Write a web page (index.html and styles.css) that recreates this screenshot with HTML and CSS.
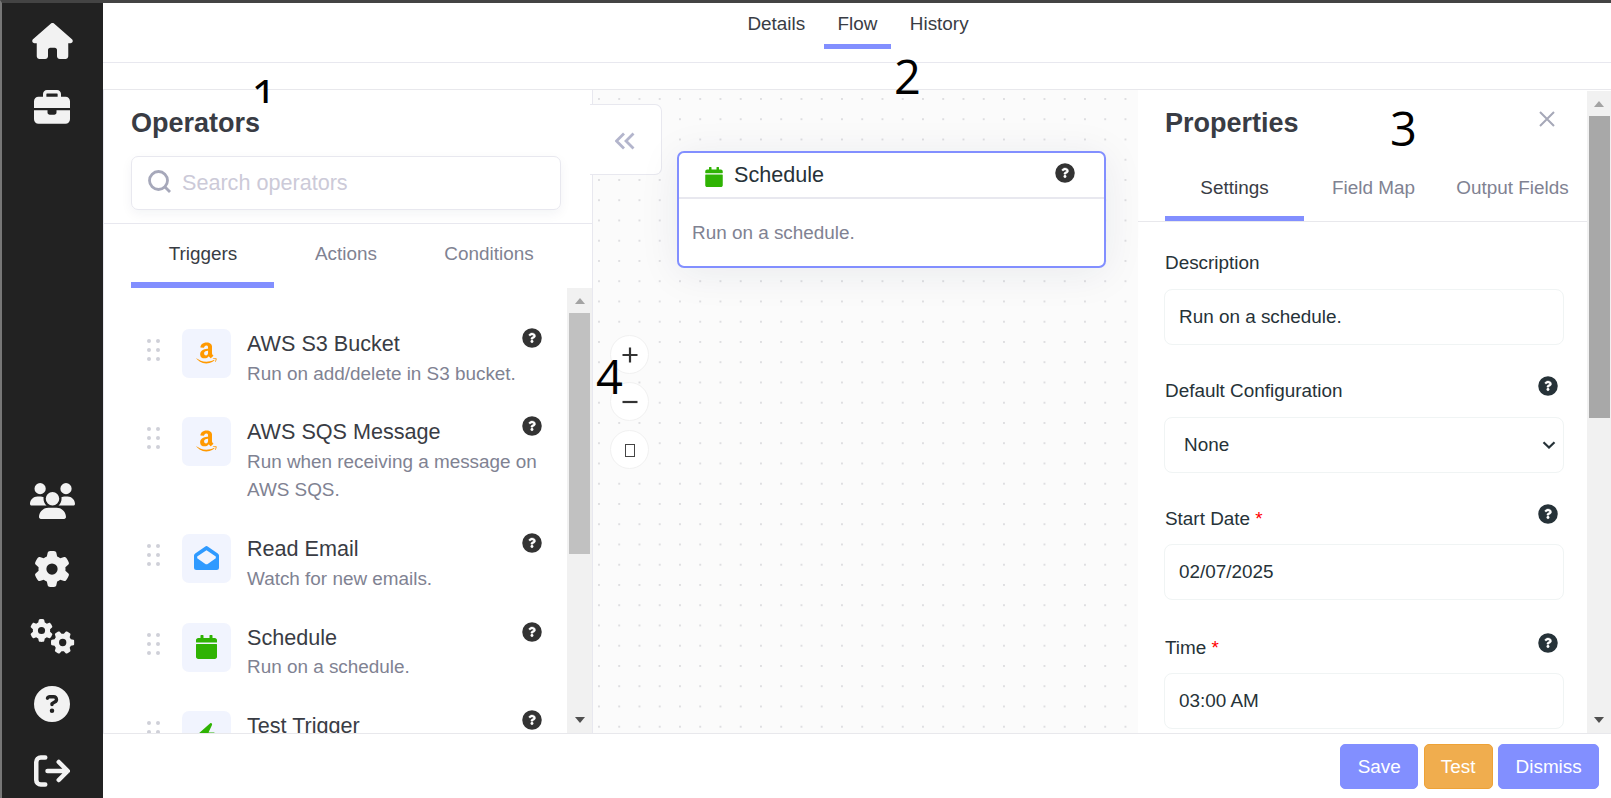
FILE: index.html
```html
<!DOCTYPE html>
<html lang="en">
<head>
    <meta charset="UTF-8">
    <meta name="viewport" content="width=device-width, initial-scale=1.0">
    <title>Flow</title>
    <link rel="stylesheet" href="styles.css">
</head>
<body>
    <svg class="sprite">
        <symbol id="gear" viewBox="0 0 512 512"><path d="M495.9 166.6c3.2 8.7 .5 18.4-6.4 24.6l-43.3 39.4c1.1 8.3 1.7 16.8 1.7 25.4s-.6 17.1-1.7 25.4l43.3 39.4c6.9 6.2 9.6 15.9 6.4 24.6c-4.4 11.9-9.7 23.3-15.8 34.3l-4.7 8.1c-6.6 11-14 21.4-22.1 31.2c-5.9 7.2-15.7 9.6-24.5 6.8l-55.7-17.7c-13.4 10.3-28.2 18.9-44 25.4l-12.5 57.1c-2 9.1-9 16.3-18.2 17.8c-13.8 2.3-28 3.5-42.5 3.5s-28.7-1.2-42.5-3.5c-9.2-1.5-16.2-8.7-18.2-17.8l-12.5-57.1c-15.8-6.5-30.6-15.1-44-25.4L83.1 425.9c-8.8 2.8-18.6 .3-24.5-6.8c-8.1-9.8-15.5-20.2-22.1-31.2l-4.7-8.1c-6.1-11-11.4-22.4-15.8-34.3c-3.2-8.7-.5-18.4 6.4-24.6l43.3-39.4C64.6 273.1 64 264.6 64 256s.6-17.1 1.7-25.4L22.4 191.2c-6.9-6.2-9.6-15.9-6.4-24.6c4.4-11.9 9.7-23.3 15.8-34.3l4.7-8.1c6.6-11 14-21.4 22.1-31.2c5.9-7.2 15.7-9.6 24.5-6.8l55.7 17.7c13.4-10.3 28.2-18.9 44-25.4l12.5-57.1c2-9.1 9-16.3 18.2-17.8C227.3 1.2 241.5 0 256 0s28.7 1.2 42.5 3.5c9.2 1.5 16.2 8.7 18.2 17.8l12.5 57.1c15.8 6.5 30.6 15.1 44 25.4l55.7-17.7c8.8-2.8 18.6-.3 24.5 6.8c8.1 9.8 15.5 20.2 22.1 31.2l4.7 8.1c6.1 11 11.4 22.4 15.8 34.3zM256 336a80 80 0 1 0 0-160 80 80 0 1 0 0 160z"/></symbol>
        <symbol id="help" viewBox="0 0 512 512"><circle cx="256" cy="256" r="250"/><path fill="#fff" stroke="#fff" stroke-width="12" transform="translate(66 60) scale(.74)" d="M262.655 90c-54.497 0-89.255 22.957-116.549 63.758-3.536 5.286-2.353 12.415 2.715 16.258l34.699 26.31c5.205 3.947 12.621 3.008 16.665-2.122 17.864-22.658 30.113-35.797 57.303-35.797 20.429 0 45.698 13.148 45.698 32.958 0 14.976-12.363 22.667-32.534 33.976C247.128 238.528 216 254.941 216 296v4c0 6.627 5.373 12 12 12h56c6.627 0 12-5.373 12-12v-1.333c0-28.462 83.186-29.647 83.186-106.667 0-58.002-60.165-102-116.531-102zM256 338c-25.365 0-46 20.635-46 46 0 25.364 20.635 46 46 46s46-20.636 46-46c0-25.365-20.635-46-46-46z"/></symbol>
        <symbol id="amazon" viewBox="0 0 448 512"><path d="M257.2 162.7c-48.7 1.8-169.5 15.5-169.5 117.5 0 109.5 138.3 114 183.5 43.2 6.5 10.2 35.4 37.5 45.3 46.8l56.8-56S341 288.9 341 261.4V114.3C341 89 316.5 32 228.7 32 140.7 32 94 87 94 136.3l73.5 6.8c16.3-49.5 54.2-49.5 54.2-49.5 40.7-.1 35.5 29.8 35.5 69.1zm0 86.8c0 80-84.2 68-84.2 17.2 0-47.2 50.5-56.7 84.2-57.8v40.6zm136 163.5c-7.7 10-70 67-174.5 67S34.2 408.5 9.7 379c-6.8-7.7 1-11.3 5.5-8.3C88.5 415.2 203 488.5 387.7 401c7.5-3.7 13.3 2 5.5 12zm39.8 2.2c-6.5 15.8-16 26.8-21.2 31-5.5 4.5-9.5 2.7-6.5-3.8s19.3-46.5 12.7-55c-6.5-8.3-37-4.3-48-3.2-10.8 1-13 2-14-.3-2.3-5.7 21.7-15.5 37.5-17.5 15.7-1.8 41-.8 46 5.7 3.7 5.1 0 27.1-6.5 43.1z"/></symbol>
        <symbol id="calendar" viewBox="0 0 448 512"><path d="M12 192h424c6.600 0 12 5.400 12 12v260c0 26.500-21.500 48-48 48H48c-26.500 0-48-21.500-48-48V204c0-6.600 5.400-12 12-12zm436-44v-36c0-26.500-21.500-48-48-48h-48V12c0-6.600-5.400-12-12-12h-40c-6.600 0-12 5.400-12 12v52H160V12c0-6.600-5.400-12-12-12h-40c-6.600 0-12 5.400-12 12v52H48C21.500 64 0 85.500 0 112v36c0 6.600 5.400 12 12 12h424c6.600 0 12-5.400 12-12z"/></symbol>
        <symbol id="grip" viewBox="0 0 13 22"><circle cx="2" cy="2" r="2"/><circle cx="11" cy="2" r="2"/><circle cx="2" cy="11" r="2"/><circle cx="11" cy="11" r="2"/><circle cx="2" cy="20" r="2"/><circle cx="11" cy="20" r="2"/></symbol>
    </svg>

    <div class="app">
        <nav class="sidebar">
            <div class="nav-group">
                <svg viewBox="0 0 576 512" width="41" height="36"><path d="M575.8 255.5c0 18-15 32.1-32 32.1h-32l.7 160.2c0 2.700-.2 5.400-.5 8.100V472c0 22.100-17.900 40-40 40H392c-22.100 0-40-17.900-40-40V384c0-17.700-14.300-32-32-32H256c-17.700 0-32 14.300-32 32v88c0 22.100-17.900 40-40 40H104c-22.100 0-40-17.900-40-40V287.600H32c-18 0-32-14-32-32.100c0-9 3-17 10-24L266.400 8c7-7 15-8 22-8s15 2 21 7L564.800 231.500c8 7 12 15 11 24z"/></svg>
                <svg viewBox="0 0 512 512" width="36" height="36"><path d="M184 48H328c4.400 0 8 3.600 8 8V96H176V56c0-4.400 3.600-8 8-8zm-56 8V96H64C28.700 96 0 124.700 0 160v96H512V160c0-35.300-28.700-64-64-64H384V56c0-30.900-25.100-56-56-56H184c-30.900 0-56 25.100-56 56zM512 288H320v32c0 17.700-14.300 32-32 32H224c-17.700 0-32-14.300-32-32V288H0V416c0 35.300 28.700 64 64 64H448c35.300 0 64-28.700 64-64V288z"/></svg>
            </div>
            <div class="nav-group">
                <svg viewBox="0 0 640 512" width="45" height="36"><path d="M144 0a80 80 0 1 1 0 160A80 80 0 1 1 144 0zM512 0a80 80 0 1 1 0 160A80 80 0 1 1 512 0zM0 298.700C0 239.800 47.800 192 106.700 192h42.700c15.900 0 31 3.500 44.600 9.700c-1.300 7.200-1.900 14.700-1.900 22.300c0 38.200 16.800 72.500 43.300 96H21.300C9.600 320 0 310.400 0 298.700zM405.300 320c26.600-23.500 43.300-57.800 43.300-96c0-7.600-.7-15-1.900-22.300c13.600-6.300 28.700-9.700 44.600-9.700h42.700C592.200 192 640 239.800 640 298.700c0 11.800-9.600 21.300-21.300 21.300H405.300zM224 224a96 96 0 1 1 192 0 96 96 0 1 1 -192 0zM128 485.300C128 411.700 187.700 352 261.300 352H378.700C452.300 352 512 411.700 512 485.300c0 14.700-11.900 26.700-26.700 26.700H154.700c-14.700 0-26.700-11.900-26.700-26.700z"/></svg>
                <svg width="36" height="36"><use href="#gear"/></svg>
                <svg viewBox="0 0 45 36" width="45" height="36"><use href="#gear" x="0" y="1" width="23" height="23"/><g transform="rotate(90 32.700 24.500)"><use href="#gear" x="21" y="12.800" width="23.400" height="23.400"/></g></svg>
                <svg viewBox="0 0 512 512" width="36" height="36"><path d="M256 512A256 256 0 1 0 256 0a256 256 0 1 0 0 512zM169.800 165.300c7.900-22.300 29.100-37.300 52.800-37.300h58.300c34.900 0 63.100 28.300 63.100 63.100c0 22.600-12.100 43.500-31.700 54.800L280 264.400c-.2 13-10.900 23.600-24 23.600c-13.300 0-24-10.700-24-24V250.500c0-8.600 4.600-16.500 12.100-20.800l44.300-25.400c4.700-2.700 7.600-7.700 7.600-13.100c0-8.400-6.800-15.100-15.100-15.100H222.600c-3.400 0-6.400 2.100-7.500 5.300l-.4 1.200c-4.400 12.500-18.200 19-30.600 14.600s-19-18.200-14.600-30.600l.4-1.200zM224 352a32 32 0 1 1 64 0 32 32 0 1 1 -64 0z"/></svg>
                <svg class="line-icon" viewBox="0 0 512 512" width="36" height="36"><path d="M160 64H96a64 64 0 0 0-64 64v256a64 64 0 0 0 64 64h64M192 256H476M352 128l128 128-128 128"/></svg>
            </div>
        </nav>

        <main class="main">
            <header class="page-tabs">
                <a class="page-tab">Details</a>
                <a class="page-tab active">Flow</a>
                <a class="page-tab">History</a>
            </header>
            <div class="spacer"></div>

            <div class="workspace">
                <section class="operators">
                    <div class="operators-head">
                        <h2>Operators</h2>
                        <div class="search">
                            <svg viewBox="0 0 24 24" width="24" height="24"><circle cx="10.500" cy="10.500" r="9"/><path d="M17 17l5 5"/></svg>
                            <span>Search operators</span>
                        </div>
                    </div>
                    <div class="tabs">
                        <a class="tab active">Triggers</a>
                        <a class="tab">Actions</a>
                        <a class="tab">Conditions</a>
                    </div>
                    <div class="list-wrap">
                        <div class="list">
                            <div class="item">
                                <svg class="grip"><use href="#grip"/></svg>
                                <div class="item-icon orange"><svg width="21" height="24"><use href="#amazon"/></svg></div>
                                <div class="item-text">
                                    <div class="item-title">AWS S3 Bucket<svg class="help"><use href="#help"/></svg></div>
                                    <p>Run on add/delete in S3 bucket.</p>
                                </div>
                            </div>
                            <div class="item">
                                <svg class="grip"><use href="#grip"/></svg>
                                <div class="item-icon orange"><svg width="21" height="24"><use href="#amazon"/></svg></div>
                                <div class="item-text">
                                    <div class="item-title">AWS SQS Message<svg class="help"><use href="#help"/></svg></div>
                                    <p>Run when receiving a message on AWS SQS.</p>
                                </div>
                            </div>
                            <div class="item">
                                <svg class="grip"><use href="#grip"/></svg>
                                <div class="item-icon blue"><svg viewBox="0 0 25 24" width="25" height="24"><path fill-rule="evenodd" d="M11 .7Q12.500-.5 14 .7L23.800 7.500Q25 8.400 25 9.500V21.500Q25 24 22.500 24H2.500Q0 24 0 21.500V9.500Q0 8.400 1.200 7.500zM12.500 4.200L3.200 10.500V12.300L11 17.800Q12.500 18.800 14 17.800L21.800 12.300V10.500z"/></svg></div>
                                <div class="item-text">
                                    <div class="item-title">Read Email<svg class="help"><use href="#help"/></svg></div>
                                    <p>Watch for new emails.</p>
                                </div>
                            </div>
                            <div class="item">
                                <svg class="grip"><use href="#grip"/></svg>
                                <div class="item-icon green"><svg width="21" height="24"><use href="#calendar"/></svg></div>
                                <div class="item-text">
                                    <div class="item-title">Schedule<svg class="help"><use href="#help"/></svg></div>
                                    <p>Run on a schedule.</p>
                                </div>
                            </div>
                            <div class="item">
                                <svg class="grip"><use href="#grip"/></svg>
                                <div class="item-icon green"><svg viewBox="0 0 21 24" width="21" height="24"><path d="M14.500 0Q16.500 0 16 2L12.500 9.500H18Q19.500 10 18.500 11.500L6.500 23.500Q4 24.500 4.800 22L8.500 13.500H2Q.5 13 1.500 11.500z"/></svg></div>
                                <div class="item-text">
                                    <div class="item-title">Test Trigger<svg class="help"><use href="#help"/></svg></div>
                                </div>
                            </div>
                        </div>
                        <div class="scrollbar">
                            <i class="arrow-up"></i>
                            <div class="thumb"></div>
                            <i class="arrow-down"></i>
                        </div>
                    </div>
                </section>

                <section class="canvas">
                    <div class="collapse">
                        <svg viewBox="0 0 20 18" width="20" height="18"><path d="M9 1.500L1.500 9L9 16.500M18.500 1.500L11 9l7.500 7.500"/></svg>
                    </div>
                    <div class="node">
                        <div class="node-head">
                            <svg class="node-icon"><use href="#calendar"/></svg>
                            <span>Schedule</span>
                            <svg class="help"><use href="#help"/></svg>
                        </div>
                        <div class="node-body">Run on a schedule.</div>
                    </div>
                    <div class="zoom-controls">
                        <button><svg viewBox="0 0 16 16" width="16" height="16"><path d="M8 .5v15M.5 8h15"/></svg></button>
                        <button><svg viewBox="0 0 16 16" width="16" height="16"><path d="M.5 8h15"/></svg></button>
                        <button><i class="box"></i></button>
                    </div>
                </section>

                <section class="properties">
                    <div class="properties-main">
                        <div class="properties-head">
                            <h2>Properties</h2>
                            <svg class="close" viewBox="0 0 16 16" width="16" height="16"><path d="M1 1l14 14M15 1L1 15"/></svg>
                        </div>
                        <div class="tabs">
                            <a class="tab active">Settings</a>
                            <a class="tab">Field Map</a>
                            <a class="tab">Output Fields</a>
                        </div>
                        <div class="form">
                            <div class="field">
                                <div class="label">Description</div>
                                <div class="input">Run on a schedule.</div>
                            </div>
                            <div class="field">
                                <div class="label">Default Configuration<svg class="help"><use href="#help"/></svg></div>
                                <div class="input select">None<svg viewBox="0 0 14 8" width="14" height="8"><path d="M1.500 1.200L7 6.500l5.500-5.300"/></svg></div>
                            </div>
                            <div class="field">
                                <div class="label"><span>Start Date <b>*</b></span><svg class="help"><use href="#help"/></svg></div>
                                <div class="input">02/07/2025</div>
                            </div>
                            <div class="field">
                                <div class="label"><span>Time <b>*</b></span><svg class="help"><use href="#help"/></svg></div>
                                <div class="input">03:00 AM</div>
                            </div>
                        </div>
                    </div>
                    <div class="scrollbar">
                        <i class="arrow-up"></i>
                        <div class="thumb"></div>
                        <i class="arrow-down"></i>
                    </div>
                </section>
            </div>

            <footer class="actions">
                <button class="btn">Save</button>
                <button class="btn btn-warning">Test</button>
                <button class="btn">Dismiss</button>
            </footer>
        </main>
    </div>

    <!-- callout numbers over the panels -->
    <span class="callout one">1</span>
    <span class="callout two">2</span>
    <span class="callout three">3</span>
    <span class="callout four">4</span>
</body>
</html>
```
FILE: styles.css
```css
* {
    margin: 0;
    padding: 0;
    box-sizing: border-box;
}
body {
    width: 1611px;
    height: 798px;
    overflow: hidden;
    position: relative;
    font-family: 'Liberation Sans', Arial, sans-serif;
    font-size: 18.9px;
    color: #393c44;
    background: #fff;
}
svg {
    display: block;
    flex: none;
}
.sprite {
    position: absolute;
    width: 0;
    height: 0;
}
.app {
    display: flex;
    height: 798px;
    border-top: 3px solid #444;
    border-left: 2px solid #777;
}

/* sidebar */
.sidebar {
    width: 101px;
    padding: 20px 1px 9px 0;
    background: #222;
    display: flex;
    flex-direction: column;
    justify-content: space-between;
}
.nav-group {
    display: flex;
    flex-direction: column;
    align-items: center;
    gap: 31.4px;
}
.nav-group svg {
    fill: #f2f2f2;
}
.nav-group .line-icon {
    fill: none;
    stroke: #f2f2f2;
    stroke-width: 64;
    stroke-linecap: round;
    stroke-linejoin: round;
}

/* top tabs */
.main {
    flex: 1;
    min-width: 0;
    display: flex;
    flex-direction: column;
}
.page-tabs {
    height: 60px;
    padding-left: 2px;
    display: flex;
    justify-content: center;
    gap: 5.4px;
    border-bottom: 1px solid #e8e8ef;
}
.page-tab {
    height: 46px;
    padding: 0 13.5px;
    line-height: 41px;
    border-bottom: 5px solid transparent;
}
.active {
    border-bottom-color: #828fff !important;
}
.spacer {
    height: 27px;
    border-bottom: 1px solid #e8e8ec;
}
.workspace {
    height: 643px;
    display: grid;
    grid-template-columns: 490px 545px 473px;
}

/* operators */
.operators {
    border: solid #e8e8ef;
    border-width: 0 1px;
    display: flex;
    flex-direction: column;
    min-height: 0;
}
h2 {
    font-size: 27px;
    line-height: 31px;
}
.operators-head {
    height: 134px;
    padding: 18px 31px 0 27px;
    border-bottom: 1px solid #e8e8ef;
}
.search {
    height: 54px;
    margin-top: 17px;
    padding-left: 16px;
    display: flex;
    align-items: center;
    gap: 10px;
    border: 1px solid #e8e8ef;
    border-radius: 7px;
    box-shadow: 0 4px 12px rgba(22, 33, 74, 0.05);
    font-size: 21.6px;
    color: #cccad8;
}
.search svg {
    margin-top: -2px;
    fill: none;
    stroke: #a6a8ba;
    stroke-width: 2.8;
}
.tabs {
    display: grid;
    text-align: center;
}
.tab {
    color: #808292;
    border-bottom: 5px solid transparent;
}
.tab.active {
    color: #393c44;
}
.operators .tabs {
    height: 64px;
    padding-left: 27px;
    grid-template-columns: repeat(3, 143px);
}
.operators .tab {
    line-height: 60px;
    height: 64px;
    padding-left: 1px;
    border-bottom-width: 6px;
}
.list-wrap {
    flex: 1;
    min-height: 0;
    display: flex;
    overflow: hidden;
}
.list {
    flex: 1;
    padding: 41px 22px 0 43px;
    display: flex;
    flex-direction: column;
    gap: 29.6px;
}
.item {
    display: flex;
    align-items: flex-start;
}
.grip {
    width: 13px;
    height: 22px;
    margin: 10px 22px 0 0;
    fill: #cfd0d8;
}
.item-icon {
    flex: none;
    width: 49px;
    height: 49px;
    margin-right: 16px;
    display: flex;
    align-items: center;
    justify-content: center;
    border-radius: 7px;
    background: #f1f4fe;
}
.item-icon svg {
    margin: -1px 1px 0 0;
}
.orange {
    fill: #ff9900;
}
.blue {
    fill: #2f9aff;
}
.green,
.node-icon {
    fill: #2fb303;
}
.item-text {
    flex: 1;
    line-height: 28.35px;
    color: #808292;
}
.item-title {
    height: 30.5px;
    display: flex;
    justify-content: space-between;
    padding-right: 3px;
    line-height: 29px;
    font-size: 21.6px;
    color: #393c44;
}
.help {
    width: 20px;
    height: 20px;
    margin-top: -1px;
    fill: #333;
}

/* scrollbars */
.scrollbar {
    width: 25px;
    padding: 10px 2px;
    background: #f1f1f1;
    display: flex;
    flex-direction: column;
    align-items: center;
}
.arrow-up,
.arrow-down {
    border: solid transparent;
    border-width: 0 5.5px;
}
.arrow-up {
    border-bottom: 6px solid #a3a3a3;
}
.arrow-down {
    margin-top: auto;
    border-top: 6px solid #505050;
}
.thumb {
    width: 21px;
    height: 241px;
    margin-top: 9px;
    background: #c1c1c1;
}

/* canvas */
.canvas {
    position: relative;
    background-image:
        linear-gradient(90deg, transparent 2px, #fbfbfb 2px),
        linear-gradient(#dedee1 2px, #fbfbfb 2px);
    background-size: 20.25px 20.25px;
    background-position: 5px 8px;
}
.collapse {
    position: absolute;
    left: -3px;
    top: 14px;
    width: 72px;
    height: 71px;
    padding: 27px 0 0 25px;
    background: #fff;
    border: 1px solid #e8e8ef;
    border-left: 0;
    border-radius: 0 7px 7px 0;
}
.collapse svg {
    fill: none;
    stroke: #b3b5cc;
    stroke-width: 2.8;
}
.node {
    position: absolute;
    left: 84px;
    top: 61px;
    width: 429px;
    height: 117px;
    background: #fff;
    border: 2px solid #828fff;
    border-radius: 7px;
    box-shadow: 0 5px 40px rgba(22, 33, 74, 0.08);
}
.node-head {
    height: 46px;
    padding: 0 29px 0 26px;
    display: flex;
    border-bottom: 2px solid #e8e8ef;
    font-size: 21.6px;
    line-height: 43px;
    color: #263238;
}
.node-icon {
    width: 18px;
    height: 20px;
    margin: 14px 11px 0 0;
}
.node .help {
    margin: 10px 0 0 auto;
}
.node-body {
    padding: 20px 13px;
    line-height: 28px;
    color: #808292;
}
.zoom-controls {
    position: absolute;
    left: 17px;
    top: 245px;
    display: flex;
    flex-direction: column;
    gap: 8.4px;
}
.zoom-controls button {
    width: 39px;
    height: 39px;
    display: flex;
    align-items: center;
    justify-content: center;
    background: #fff;
    border: 1px solid #f1f1f1;
    border-radius: 50%;
}
.zoom-controls svg {
    stroke: #333;
    stroke-width: 2.2;
}
.box {
    width: 10px;
    height: 13px;
    margin-top: 2px;
    border: 1px solid #444;
}

/* properties */
.properties {
    display: flex;
    min-height: 0;
    overflow: hidden;
}
.properties-main {
    flex: 1;
}
.properties-head {
    padding: 18px 32px 0 27px;
    display: flex;
    justify-content: space-between;
}
.close {
    margin-top: 3px;
    stroke: #a6a8b8;
    stroke-width: 2;
}
.properties .tabs {
    height: 83px;
    padding: 15px 0 0 27px;
    grid-template-columns: repeat(3, 139px);
    border-bottom: 1px solid #e8e8ec;
}
.properties .tab {
    height: 67px;
    line-height: 67px;
}
.form {
    padding: 27px 23px 0 26px;
}
.field {
    height: 128.2px;
    color: #263238;
}
.label {
    height: 40px;
    padding: 0 6px 0 1px;
    display: flex;
    justify-content: space-between;
    line-height: 27px;
}
.label b {
    font-weight: normal;
    color: red;
}
.label .help {
    fill: #263238;
}
.input {
    height: 56px;
    padding: 0 14px;
    line-height: 54px;
    border: 1px solid #f0f4f4;
    border-radius: 8px;
}
.select {
    padding: 0 7px 0 19px;
    display: flex;
    align-items: center;
    justify-content: space-between;
    line-height: 52px;
}
.select svg {
    fill: none;
    stroke: #263238;
    stroke-width: 2.2;
}
.field:nth-child(n + 3) .input {
    margin-top: -1px;
}
.properties .scrollbar {
    width: 24px;
    margin-top: 1px;
}
.properties .thumb {
    height: 302px;
    background: #a8a8a8;
}

/* footer */
.actions {
    flex: 1;
    padding: 10px 12px 0;
    display: flex;
    justify-content: flex-end;
    gap: 5.5px;
    border-top: 1px solid #e8e8ec;
}
.btn {
    height: 45px;
    padding: 0 16.3px;
    border: 1px solid #828fff;
    border-radius: 5px;
    background: #828fff;
    color: #fff;
    font: 18.9px 'Liberation Sans', Arial, sans-serif;
}
.btn-warning {
    background: #f0ad4e;
    border-color: #eea236;
}

.callout {
    position: absolute;
    font: 47px/34px 'Open Sans', 'Noto Sans', sans-serif;
    color: #000;
}
.one {
    left: 251px;
    top: 79px;
    height: 24px;
    overflow: hidden;
}
.two {
    left: 894px;
    top: 59px;
}
.three {
    left: 1390px;
    top: 111px;
}
.four {
    left: 596px;
    top: 359px;
}
```
